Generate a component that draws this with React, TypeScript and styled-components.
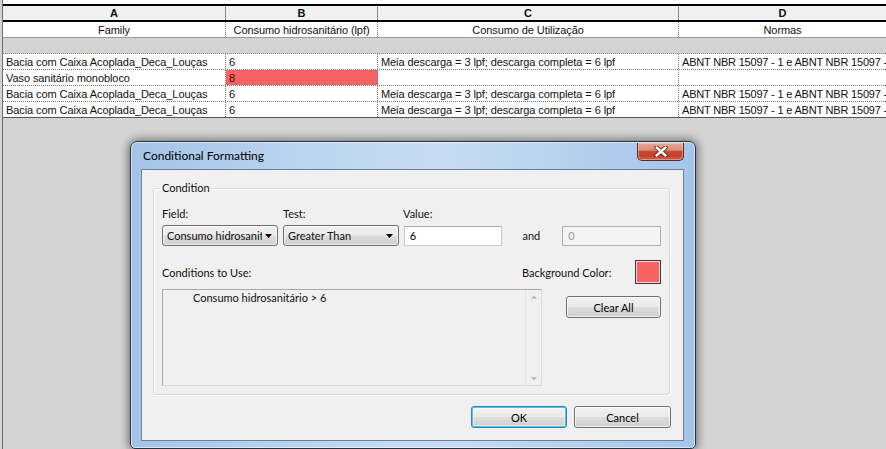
import React from 'react';
import styled, { createGlobalStyle } from 'styled-components';

const Global = createGlobalStyle`
  html, body { margin: 0; padding: 0; width: 886px; height: 449px; overflow: hidden; background: #d4d4d4; }
  #root { width: 886px; height: 449px; }
  * { box-sizing: border-box; }
`;

type Kind = 'letters' | 'names' | 'band' | 'data' | 'lastdata';

const COLS = '223px 152px 301px 1fr';
const UI_FONT = '"Lato", "Noto Sans", sans-serif';

const Screen = styled.div`
  position: relative;
  width: 886px;
  height: 449px;
  background: #d4d4d4;
  overflow: hidden;
  font-family: "Liberation Sans", Arial, sans-serif;
`;

const Sheet = styled.div`
  margin-left: 2px;
  height: 100%;
  border-left: 1px solid #6e6e6e;
  display: flex;
  flex-direction: column;
`;

const TopStrip = styled.div`
  height: 4px;
  background: #ffffff;
`;

const Table = styled.div`
  display: flex;
  flex-direction: column;
  border-top: 2px solid #000;
`;

const rowHeight: Record<Kind, number> = { letters: 16, names: 16, band: 16, data: 16, lastdata: 16 };
const rowBorder: Record<Kind, string> = {
  letters: '2px solid #000',
  names: '1px solid #9a9a9a',
  band: '1px dotted #8a8a8a',
  data: '1px dotted #7a7a7a',
  lastdata: '1px solid #555',
};
const rowBg: Record<Kind, string> = {
  letters: '#f0f0f0',
  names: '#ffffff',
  band: '#d4d4d4',
  data: '#ffffff',
  lastdata: '#ffffff',
};

const Row = styled.div<{ $kind: Kind }>`
  display: grid;
  grid-template-columns: ${COLS};
  height: ${p => rowHeight[p.$kind]}px;
  background: ${p => rowBg[p.$kind]};
  border-bottom: ${p => rowBorder[p.$kind]};
`;

const Cell = styled.div<{ $kind: Kind; $center?: boolean; $fill?: string; $last?: boolean }>`
  display: flex;
  align-items: center;
  justify-content: ${p => (p.$center ? 'center' : 'flex-start')};
  padding: 0 3px;
  font-size: 11px;
  letter-spacing: ${p => (p.$last && !p.$center ? '-0.2px' : '-0.08px')};
  font-weight: ${p => (p.$kind === 'letters' ? 700 : 400)};
  color: ${p => (p.$fill ? '#3a0a0a' : '#111')};
  background: ${p => p.$fill || 'transparent'};
  white-space: nowrap;
  overflow: hidden;
  border-right: ${p =>
    p.$last || p.$kind === 'band'
      ? 'none'
      : p.$kind === 'letters'
      ? '1px solid #8c8c8c'
      : '1px dotted #7a7a7a'};
`;

const DataRow: React.FC<{ cells: string[]; kind: Kind; center?: boolean; fills?: (string | undefined)[] }> = ({
  cells,
  kind,
  center,
  fills,
}) => (
  <Row $kind={kind}>
    {cells.map((c, i) => (
      <Cell key={i} $kind={kind} $center={center} $last={i === cells.length - 1} $fill={fills?.[i]}>
        {c}
      </Cell>
    ))}
  </Row>
);

/* ---------- Dialog ---------- */

const Dialog = styled.div`
  position: absolute;
  left: 130px;
  top: 141px;
  width: 566px;
  height: 308px;
  border: 1px solid #2a3440;
  border-radius: 7px 7px 5px 5px;
  background: linear-gradient(90deg, #a3c4e8 0%, #bad4ef 30%, #c8ddf3 55%, #b5cfec 80%, #a4c5ea 100%);
  box-shadow: 0 0 9px 2px rgba(0, 0, 0, 0.45), inset 0 0 0 1px rgba(255, 255, 255, 0.55);
  padding: 0 11px 7px 10px;
  display: flex;
  flex-direction: column;
  font-family: ${UI_FONT};
  font-size: 11px;
  color: #111;
`;

const TitleBar = styled.div`
  height: 27px;
  display: flex;
  justify-content: space-between;
  align-items: flex-start;
`;

const TitleText = styled.div`
  margin-top: 6px;
  padding-left: 2px;
  font-size: 12px;
  line-height: 16px;
  color: #000;
`;

const CloseButton = styled.div`
  margin-top: 1px;
  width: 47px;
  height: 18px;
  border: 1px solid #5d2a24;
  border-top: none;
  border-radius: 0 0 5px 5px;
  background: linear-gradient(180deg, #e9a898 0%, #dc8a78 42%, #c84a33 50%, #c3432c 75%, #d2654c 100%);
  box-shadow: inset 0 0 0 1px rgba(255, 210, 200, 0.45);
  display: flex;
  align-items: center;
  justify-content: center;
`;

const Client = styled.div`
  flex: 1;
  border: 1px solid #6d8099;
  background: #f0f0f0;
  padding: 0 12px 10px 11px;
  display: flex;
  flex-direction: column;
`;

const Group = styled.fieldset`
  margin: 10px 1px 0 0;
  padding: 10px 8px 8px 8px;
  border: 1px solid #d5d9dd;
  border-radius: 3px;
  box-shadow: inset 1px 1px 0 #ffffff, 1px 1px 0 #ffffff;
  min-width: 0;
  display: flex;
  flex-direction: column;
`;

const Legend = styled.legend`
  padding: 0 2px;
  margin-left: -2px;
  line-height: 16px;
`;

const LabelRow = styled.div`
  display: flex;
  height: 15px;
  align-items: center;
`;

const Label = styled.span<{ $w?: number }>`
  display: inline-block;
  width: ${p => (p.$w ? `${p.$w}px` : 'auto')};
  white-space: nowrap;
`;

const ControlRow = styled.div`
  display: flex;
  align-items: center;
  margin-top: 4px;
  height: 21px;
`;

const Combo = styled.div<{ $w: number }>`
  width: ${p => p.$w}px;
  height: 21px;
  margin-right: 5px;
  border: 1px solid #707070;
  border-radius: 3px;
  background: linear-gradient(180deg, #f2f2f2 0%, #ebebeb 48%, #dddddd 52%, #cfcfcf 100%);
  box-shadow: inset 0 0 0 1px rgba(255, 255, 255, 0.6);
  display: flex;
  align-items: center;
  gap: 3px;
  padding: 0 5px 0 4px;
`;

const ComboText = styled.span`
  flex: 1;
  min-width: 0;
  overflow: hidden;
  white-space: nowrap;
`;

const TextBox = styled.div<{ $w: number; $disabled?: boolean }>`
  width: ${p => p.$w}px;
  height: 20px;
  border: 1px solid ${p => (p.$disabled ? '#adb2b5' : '#c5cad2')};
  border-top-color: ${p => (p.$disabled ? '#adb2b5' : '#abadb3')};
  background: ${p => (p.$disabled ? '#f4f4f4' : '#ffffff')};
  color: ${p => (p.$disabled ? '#9a9a9a' : '#000')};
  display: flex;
  align-items: center;
  padding-left: 5px;
`;

const AndText = styled.span`
  margin: 0 22px 0 20px;
`;

const ColorRow = styled.div`
  display: flex;
  align-items: center;
  margin-top: 14px;
  height: 24px;
`;

const Swatch = styled.div<{ $color: string }>`
  margin-left: auto;
  width: 26px;
  height: 24px;
  border: 1px solid #3a3a3a;
  background: ${p => p.$color};
  box-shadow: inset 0 0 0 1px #ffd0d0;
`;

const ListRow = styled.div`
  display: flex;
  align-items: flex-start;
  margin-top: 5px;
`;

const ListBox = styled.div`
  width: 380px;
  height: 97px;
  border: 1px solid #a9a9a9;
  border-right-color: #dcdcdc;
  border-bottom-color: #dcdcdc;
  background: #f0f0f0;
  display: flex;
`;

const ListItems = styled.div`
  flex: 1;
  padding: 0 0 0 30px;
  line-height: 16px;
`;

const ScrollTrack = styled.div`
  width: 16px;
  border-left: 1px solid #e4e4e4;
  display: flex;
  flex-direction: column;
  justify-content: space-between;
  align-items: center;
  padding: 5px 0 4px;
`;

const Button = styled.div<{ $w: number; $default?: boolean }>`
  width: ${p => p.$w}px;
  height: 22px;
  border: 1px solid ${p => (p.$default ? '#3c7fb1' : '#707070')};
  border-radius: 3px;
  background: linear-gradient(180deg, #f2f2f2 0%, #ebebeb 48%, #dddddd 52%, #cfcfcf 100%);
  box-shadow: ${p =>
    p.$default ? 'inset 0 0 0 1px #48c4f0, inset 0 0 0 2px rgba(255,255,255,0.5)' : 'inset 0 0 0 1px rgba(255,255,255,0.7)'};
  display: flex;
  align-items: center;
  justify-content: center;
  color: #000;
`;

const ClearButton = styled(Button)`
  margin-left: 24px;
  margin-top: 7px;
`;

const Footer = styled.div`
  display: flex;
  justify-content: flex-end;
  gap: 7px;
  margin-top: 11px;
`;

const Arrow: React.FC<{ up?: boolean; color?: string; w?: number }> = ({ up, color = '#000', w = 7 }) => (
  <svg width={w} height={4} viewBox="0 0 7 4" style={{ flexShrink: 0 }}>
    <path d={up ? 'M0 4 L3.5 0 L7 4 Z' : 'M0 0 L7 0 L3.5 4 Z'} fill={color} />
  </svg>
);

const rowsData = [
  {
    cells: ['Bacia com Caixa Acoplada_Deca_Louças', '6', 'Meia descarga = 3 lpf; descarga completa = 6 lpf', 'ABNT NBR 15097 - 1 e ABNT NBR 15097 - 2'],
  },
  { cells: ['Vaso sanitário monobloco', '8', '', ''], fills: [undefined, '#f76262', undefined, undefined] },
  {
    cells: ['Bacia com Caixa Acoplada_Deca_Louças', '6', 'Meia descarga = 3 lpf; descarga completa = 6 lpf', 'ABNT NBR 15097 - 1 e ABNT NBR 15097 - 2'],
  },
  {
    cells: ['Bacia com Caixa Acoplada_Deca_Louças', '6', 'Meia descarga = 3 lpf; descarga completa = 6 lpf', 'ABNT NBR 15097 - 1 e ABNT NBR 15097 - 2'],
  },
];

export default function App() {
  return (
    <Screen>
      <Global />
      <Sheet>
        <TopStrip />
        <Table>
          <DataRow kind="letters" center cells={['A', 'B', 'C', 'D']} />
          <DataRow kind="names" center cells={['Family', 'Consumo hidrosanitário (lpf)', 'Consumo de Utilização', 'Normas']} />
          <DataRow kind="band" cells={['', '', '', '']} />
          {rowsData.map((r, i) => (
            <DataRow key={i} kind={i === rowsData.length - 1 ? 'lastdata' : 'data'} cells={r.cells} fills={r.fills} />
          ))}
        </Table>
      </Sheet>

      <Dialog>
        <TitleBar>
          <TitleText>Conditional Formatting</TitleText>
          <CloseButton>
            <svg width="14" height="11" viewBox="0 0 14 11">
              <path d="M2.5 1.5 L11.5 9.5 M11.5 1.5 L2.5 9.5" stroke="#5a1f18" strokeWidth="4.2" strokeLinecap="round" />
              <path d="M2.5 1.5 L11.5 9.5 M11.5 1.5 L2.5 9.5" stroke="#ffffff" strokeWidth="2.4" strokeLinecap="round" />
            </svg>
          </CloseButton>
        </TitleBar>
        <Client>
          <Group>
            <Legend>Condition</Legend>
            <LabelRow>
              <Label $w={121}>Field:</Label>
              <Label $w={120}>Test:</Label>
              <Label>Value:</Label>
            </LabelRow>
            <ControlRow>
              <Combo $w={116}>
                <ComboText>Consumo hidrosanitário (lpf)</ComboText>
                <Arrow />
              </Combo>
              <Combo $w={116}>
                <ComboText>Greater Than</ComboText>
                <Arrow />
              </Combo>
              <TextBox $w={99}>6</TextBox>
              <AndText>and</AndText>
              <TextBox $w={99} $disabled>
                0
              </TextBox>
            </ControlRow>
            <ColorRow>
              <Label $w={360}>Conditions to Use:</Label>
              <Label>Background Color:</Label>
              <Swatch $color="#f76262" />
            </ColorRow>
            <ListRow>
              <ListBox>
                <ListItems>Consumo hidrosanitário &gt; 6</ListItems>
                <ScrollTrack>
                  <Arrow up color="#b8b8b8" w={6} />
                  <Arrow color="#b8b8b8" w={6} />
                </ScrollTrack>
              </ListBox>
              <ClearButton $w={95}>Clear All</ClearButton>
            </ListRow>
          </Group>
          <Footer>
            <Button $w={96} $default>
              OK
            </Button>
            <Button $w={97}>Cancel</Button>
          </Footer>
        </Client>
      </Dialog>
    </Screen>
  );
}
